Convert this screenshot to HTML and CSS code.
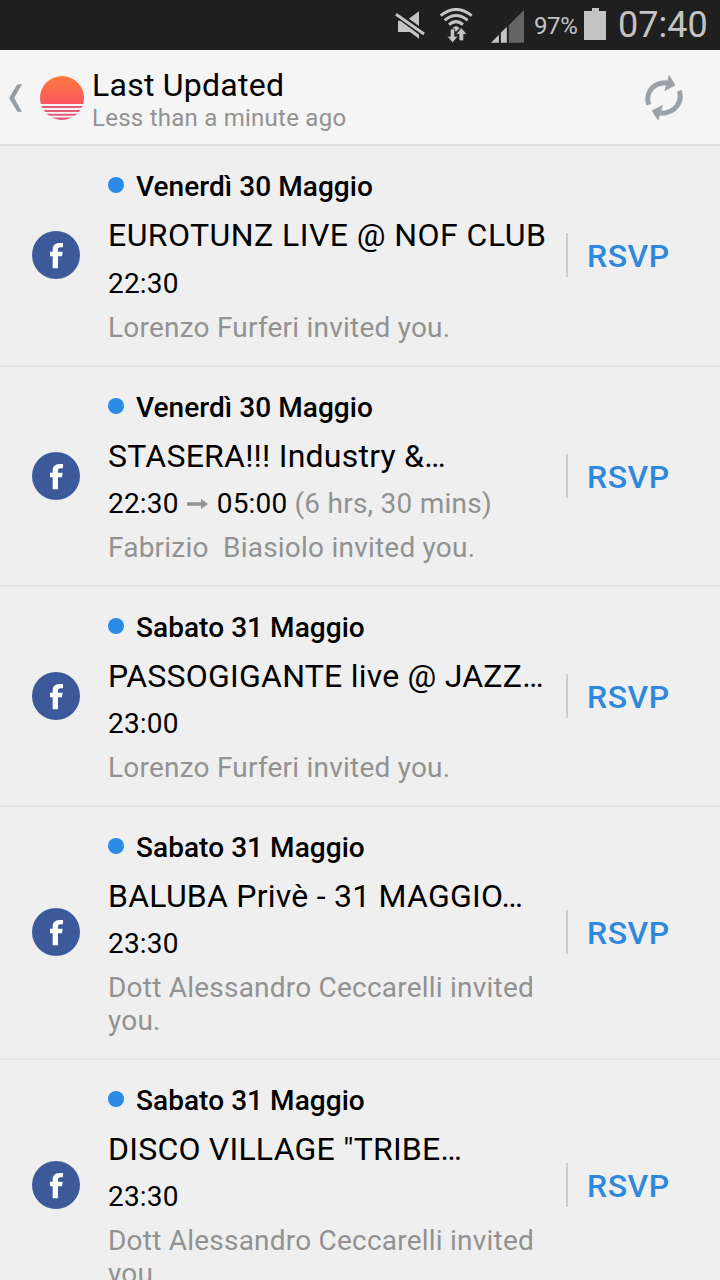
FILE: index.html
```html
<!DOCTYPE html>
<html lang="it">
<head>
<meta charset="utf-8">
<title>Last Updated</title>
<link rel="stylesheet" href="styles.css">
</head>
<body>
<svg class="defs" width="0" height="0" aria-hidden="true">
  <symbol id="facebook" viewBox="0 0 144 144">
    <circle cx="72" cy="72" r="72" fill="#3c5a99"/>
    <path d="M62 112V76H54V62H62V56Q62 36 82 36H93V49H86Q78 49 78 56V62H92L90 76H78V112Z" fill="#fff"/>
  </symbol>
</svg>
<div class="status">
  <svg class="mute" viewBox="45 30 90 90">
    <path d="M54 62H78L117 34V116L90 96H54Z" fill="#c4c4c4"/>
    <path d="M44 37L136 105" stroke="#1f1f1f" stroke-width="20"/>
    <path d="M48 43L132 102" stroke="#c4c4c4" stroke-width="9"/>
  </svg>
  <svg class="wifi" viewBox="180 24 99 105">
    <g fill="none" stroke="#c4c4c4" stroke-width="9">
      <path d="M182 47Q228 10 275 47"/>
      <path d="M194 61Q228 32 263 61"/>
      <path d="M207 74Q228 56 249 74"/>
    </g>
    <path d="M217 84Q228 74 239 84L228 95Z" fill="#c4c4c4"/>
    <path d="M211 87H224V109H234L218 128L201 109H211ZM237 122V103H228L244 83L261 103H251V122Z" fill="#c4c4c4" stroke="#1f1f1f" stroke-width="2"/>
  </svg>
  <svg class="signal" viewBox="333 30 100 100">
    <path d="M387 76L433 30V129H387Z" fill="#646464"/>
    <path d="M333 129L357 105V129ZM363 99L381 81V129H363Z" fill="#c4c4c4"/>
  </svg>
  <span class="percent">97%</span>
  <svg class="battery" viewBox="0 0 22 32"><path d="M0 3H8V0H15V3H22V32H0Z" fill="#c4c4c4"/></svg>
  <span class="clock">07:40</span>
</div>
<header class="bar">
  <svg class="back" viewBox="0 0 40 84"><path d="M26 0H40L16 42L40 84H26L0 42Z" fill="#959ca3"/></svg>
  <svg class="logo" viewBox="0 0 132 132">
    <defs>
      <linearGradient id="sun" x1="0" y1="0" x2="0" y2="1"><stop offset="0" stop-color="#ff7a3c"/><stop offset=".64" stop-color="#fb5560"/><stop offset=".66" stop-color="#e65c78"/><stop offset="1" stop-color="#e25a7c"/></linearGradient>
    </defs>
    <circle cx="66" cy="66" r="66" fill="url(#sun)"/>
    <path d="M0 87H132M0 99H132M0 110.500H132M0 122H132" stroke="#f5f5f5" stroke-width="5.500"/>
  </svg>
  <div class="heading">
    <h1 class="title">Last Updated</h1>
    <p class="subtitle">Less than a minute ago</p>
  </div>
  <svg class="refresh" viewBox="76 42 114 144">
    <g fill="none" stroke="#9aa1a7" stroke-width="15">
      <path d="M87 134C78 104 92 67 142 68"/>
      <path d="M179 92C188 122 172 159 122 160"/>
    </g>
    <path d="M148 44L167 76L134 94ZM116 182L96 152L130 134Z" fill="#9aa1a7"/>
  </svg>
</header>
<main class="list">
  <article class="event first">
    <svg class="source"><use href="#facebook"/></svg>
    <div class="details">
      <div class="date"><i class="dot"></i><span class="day">Venerdì 30 Maggio</span></div>
      <h2 class="name"><span>EUROTUNZ LIVE @ NOF CLUB</span></h2>
      <p class="time">22:30</p>
      <p class="invite">Lorenzo Furferi invited you.</p>
    </div>
    <a class="rsvp">RSVP</a>
  </article>
  <article class="event">
    <svg class="source"><use href="#facebook"/></svg>
    <div class="details">
      <div class="date"><i class="dot"></i><span class="day">Venerdì 30 Maggio</span></div>
      <h2 class="name"><span>STASERA!!! Industry &amp;…</span></h2>
      <p class="time"><span>22:30</span><svg class="arrow" viewBox="0 0 63 30"><path d="M0 10H42V0L63 15L42 30V20H0Z" fill="#929292"/></svg><span>05:00</span> <span class="length">(6 hrs, 30 mins)</span></p>
      <p class="invite">Fabrizio&nbsp; Biasiolo invited you.</p>
    </div>
    <a class="rsvp">RSVP</a>
  </article>
  <article class="event">
    <svg class="source"><use href="#facebook"/></svg>
    <div class="details">
      <div class="date"><i class="dot"></i><span class="day">Sabato 31 Maggio</span></div>
      <h2 class="name"><span>PASSOGIGANTE live @ JAZZ…</span></h2>
      <p class="time">23:00</p>
      <p class="invite">Lorenzo Furferi invited you.</p>
    </div>
    <a class="rsvp">RSVP</a>
  </article>
  <article class="event">
    <svg class="source"><use href="#facebook"/></svg>
    <div class="details">
      <div class="date"><i class="dot"></i><span class="day">Sabato 31 Maggio</span></div>
      <h2 class="name"><span>BALUBA Privè - 31 MAGGIO…</span></h2>
      <p class="time">23:30</p>
      <p class="invite">Dott Alessandro Ceccarelli invited you.</p>
    </div>
    <a class="rsvp">RSVP</a>
  </article>
  <article class="event">
    <svg class="source"><use href="#facebook"/></svg>
    <div class="details">
      <div class="date"><i class="dot"></i><span class="day">Sabato 31 Maggio</span></div>
      <h2 class="name"><span>DISCO VILLAGE "TRIBE…</span></h2>
      <p class="time">23:30</p>
      <p class="invite">Dott Alessandro Ceccarelli invited you.</p>
    </div>
    <a class="rsvp">RSVP</a>
  </article>
</main>
</body>
</html>
```
FILE: styles.css
```css
* { box-sizing: border-box; }
html, body { margin: 0; height: 1280px; overflow: hidden; }
body {
  display: flex;
  flex-direction: column;
  width: 720px;
  background: #efefef;
  color: #000;
  font-family: Roboto, "Noto Sans", sans-serif;
}
h1, h2, p { margin: 0; font-weight: 400; }
svg { display: block; flex: none; }
.defs { display: none; }

.status {
  display: flex;
  flex: none;
  height: 50px;
  padding-left: 395px;
  background: #1f1f1f;
  color: #c4c4c4;
}
.mute { width: 30px; height: 30px; margin-top: 10px; }
.wifi { width: 33px; height: 35px; margin: 8px 0 0 15px; }
.signal { width: 33px; height: 33px; margin: 10px 0 0 18px; }
.percent { width: 44px; margin: 12px 0 0 10px; font-size: 24px; line-height: 28px; letter-spacing: -.4px; white-space: nowrap; }
.battery { width: 22px; height: 32px; margin: 8px 0 0 6px; }
.clock { margin: 4px 0 0 12px; font-size: 36px; line-height: 42px; white-space: nowrap; }

.bar {
  display: flex;
  flex: none;
  height: 96px;
  padding: 0 37px 0 9px;
  background: #f5f5f5;
  border-bottom: 2px solid #dfdfdf;
}
.back { width: 13px; height: 28px; margin-top: 34px; }
.logo { width: 44px; height: 44px; margin: 26px 0 0 18px; }
.heading { flex: 1; padding: 16px 0 0 8px; }
.title { font-size: 32px; line-height: 38px; letter-spacing: .25px; }
.subtitle { color: #929292; font-size: 24px; line-height: 28px; letter-spacing: .25px; }
.refresh { width: 38px; height: 48px; margin-top: 24px; }

.list { flex: none; }
.event {
  display: flex;
  align-items: center;
  padding: 0 49px 0 32px;
  border-bottom: 2px solid #e5e5e5;
}
.source { width: 48px; height: 48px; margin-bottom: 1px; }
.details { width: 486px; padding: 24px 14px 21px 28px; }
.date { display: flex; font-size: 28px; line-height: 33px; font-weight: 500; letter-spacing: .06px; }
.dot { flex: none; width: 16px; height: 16px; margin: 7px 12px 0 0; border-radius: 50%; background: #2a8ae6; }
.name { margin-top: 13px; font-size: 32px; line-height: 38px; letter-spacing: .23px; white-space: nowrap; }
.first .name { letter-spacing: .45px; }
.time { display: flex; margin-top: 12px; font-size: 28px; line-height: 33px; letter-spacing: .2px; white-space: nowrap; }
.first .time { margin-top: 13px; }
.arrow { width: 21px; height: 10px; margin: 12px 9px 0 8px; }
.length { margin-left: 7px; color: #929292; letter-spacing: .25px; }
.invite { margin-top: 11px; color: #929292; font-size: 28px; line-height: 33px; letter-spacing: .22px; }
.rsvp {
  height: 44px;
  margin-bottom: 1px;
  padding-left: 19px;
  border-left: 2px solid #cdcdcd;
  color: #2e88dc;
  font-size: 32px;
  font-weight: 500;
  line-height: 46px;
  letter-spacing: .5px;
}
```
